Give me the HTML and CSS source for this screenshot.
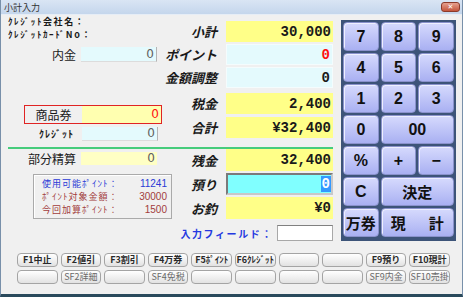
FILE: index.html
```html
<!DOCTYPE html>
<html lang="ja">
<head>
    <meta charset="UTF-8">
    <title>小計入力</title>
    <link rel="stylesheet" href="styles.css">
</head>
<body>

<div class="window">
    <div class="titlebar">
        <span class="title">小計入力</span>
        <span class="close">✕</span>
    </div>

    <div class="main">
        <div class="entry">
            <div class="upper">
                <div class="left-col">
                    <div class="credit">ｸﾚｼﾞｯﾄ会社名：</div>
                    <div class="credit">ｸﾚｼﾞｯﾄｶｰﾄﾞNo：</div>

                    <div class="lrow deposit-row">
                        <span class="lbl">内金</span>
                        <span class="sbox cyan">0</span>
                    </div>

                    <div class="coupon">
                        <span class="coupon-lbl">商品券</span>
                        <span class="sbox yellow red-text">0</span>
                    </div>

                    <div class="lrow credit-row">
                        <span class="lbl small">ｸﾚｼﾞｯﾄ</span>
                        <span class="sbox cyan">0</span>
                    </div>
                </div>

                <div class="mid-col">
                    <div class="mrow first">
                        <span class="mlbl">小計</span>
                        <span class="vbox yellow">30,000</span>
                    </div>
                    <div class="mrow">
                        <span class="mlbl">ポイント</span>
                        <span class="vbox cyan red-text">0</span>
                    </div>
                    <div class="mrow">
                        <span class="mlbl">金額調整</span>
                        <span class="vbox cyan">0</span>
                    </div>
                    <div class="mrow tax">
                        <span class="mlbl">税金</span>
                        <span class="vbox yellow">2,400</span>
                    </div>
                    <div class="mrow total">
                        <span class="mlbl">合計</span>
                        <span class="vbox yellow">¥32,400</span>
                    </div>
                </div>
            </div>

            <div class="divider"></div>

            <div class="lower">
                <div class="left-col wide">
                    <div class="lrow partial-row">
                        <span class="lbl">部分精算</span>
                        <span class="sbox pale">0</span>
                    </div>

                    <div class="points">
                        <div class="prow blue"><span>使用可能ﾎﾟｲﾝﾄ：</span><span class="pnum">11241</span></div>
                        <div class="prow brown"><span>ﾎﾟｲﾝﾄ対象金額：</span><span class="pnum">30000</span></div>
                        <div class="prow brown"><span>今回加算ﾎﾟｲﾝﾄ：</span><span class="pnum">1500</span></div>
                    </div>
                </div>

                <div class="mid-col">
                    <div class="mrow low">
                        <span class="mlbl">残金</span>
                        <span class="vbox yellow">32,400</span>
                    </div>
                    <div class="mrow low gap">
                        <span class="mlbl">預り</span>
                        <span class="vbox active"><span class="sel">0</span></span>
                    </div>
                    <div class="mrow low gap">
                        <span class="mlbl">お釣</span>
                        <span class="vbox yellow">¥0</span>
                    </div>
                </div>
            </div>

            <div class="field-row">
                <span class="field-lbl">入力フィールド：</span>
                <span class="field-box"></span>
            </div>
        </div>

        <div class="keypad">
            <button class="key">7</button>
            <button class="key">8</button>
            <button class="key">9</button>
            <button class="key">4</button>
            <button class="key">5</button>
            <button class="key">6</button>
            <button class="key">1</button>
            <button class="key">2</button>
            <button class="key">3</button>
            <button class="key">0</button>
            <button class="key span2">00</button>
            <button class="key">%</button>
            <button class="key">+</button>
            <button class="key">−</button>
            <button class="key">C</button>
            <button class="key span2 jp">決定</button>
            <button class="key jp">万券</button>
            <button class="key span2 jp wide-text">現　計</button>
        </div>
    </div>

    <div class="fkeys">
        <button class="fkey">F1中止</button>
        <button class="fkey">F2値引</button>
        <button class="fkey">F3割引</button>
        <button class="fkey">F4万券</button>
        <button class="fkey">F5ﾎﾟｲﾝﾄ</button>
        <button class="fkey">F6ｸﾚｼﾞｯﾄ</button>
        <button class="fkey"></button>
        <button class="fkey"></button>
        <button class="fkey">F9預り</button>
        <button class="fkey">F10現計</button>

        <button class="fkey sub"></button>
        <button class="fkey sub">SF2詳細</button>
        <button class="fkey sub"></button>
        <button class="fkey sub">SF4免税</button>
        <button class="fkey sub"></button>
        <button class="fkey sub"></button>
        <button class="fkey sub"></button>
        <button class="fkey sub"></button>
        <button class="fkey sub">SF9内金</button>
        <button class="fkey sub">SF10売掛</button>
    </div>
</div>

</body>
</html>
```

FILE: styles.css
```css
/* Window */
body {
    margin: 0;
    width: 463px;
    height: 297px;
    overflow: hidden;
    font-family: "Noto Sans CJK JP", sans-serif;
    color: #1a1a1a;
}

.window {
    width: 463px;
    height: 297px;
    box-sizing: border-box;
    background: #f0f0f0;
    border-left: 1px solid #7890aa;
    border-right: 1px solid #7890aa;
    border-bottom: 3px solid #2a4a5c;
}

.titlebar {
    height: 15px;
    box-sizing: border-box;
    padding: 0 2px 0 3px;
    display: flex;
    align-items: center;
    justify-content: space-between;
    background: linear-gradient(#d9e5f4, #c4d6ec);
    border-bottom: 1px solid #e6edf6;
}

.title {
    font-size: 9px;
    line-height: 1;
    color: #333;
}

.close {
    width: 19px;
    height: 10px;
    box-sizing: border-box;
    border: 1px solid #8c3a2a;
    border-radius: 3px;
    background: linear-gradient(#e6a08e, #c4553c);
    color: #fff;
    font-size: 7px;
    line-height: 8px;
    text-align: center;
    font-weight: bold;
    font-family: "DejaVu Sans", sans-serif;
}

/* Layout */
.main {
    display: flex;
    padding-left: 7px;
}

.entry {
    width: 325px;
}

.upper {
    display: flex;
    height: 132px;
}

.lower {
    display: flex;
    height: 70px;
}

.left-col {
    width: 154px;
}

.left-col.wide {
    width: 165px;
}

.mid-col {
    flex: 1;
}

.divider {
    height: 2px;
    background: #46cc7c;
}

/* Left column */
.credit {
    font-size: 9px;
    font-weight: bold;
    line-height: 13px;
    letter-spacing: 1.6px;
}

.lrow {
    display: flex;
    align-items: center;
}

.lbl {
    width: 68px;
    text-align: right;
    font-size: 12px;
    line-height: 1;
}

.lbl.small {
    width: 66px;
    font-size: 10px;
    font-weight: bold;
    letter-spacing: 1px;
}

.sbox {
    margin-left: 5px;
    width: 76px;
    box-sizing: border-box;
    padding-right: 2px;
    text-align: right;
    font-family: "DejaVu Sans", sans-serif;
    font-size: 12px;
    color: #606060;
    border-right: 1px solid #b4b4b4;
    border-bottom: 1px solid #dcdcdc;
}

.deposit-row {
    margin-top: 6px;
}

.deposit-row .sbox {
    height: 15px;
    line-height: 14px;
}

.credit-row {
    margin-top: 3px;
}

.credit-row .sbox {
    margin-left: 8px;
    height: 14px;
    line-height: 13px;
}

.partial-row {
    margin-top: 3px;
}

.partial-row .sbox {
    height: 13px;
    line-height: 12px;
    border: none;
}

.coupon {
    margin-top: 43px;
    margin-left: 16px;
    width: 138px;
    height: 19px;
    box-sizing: border-box;
    border: 1px solid #e02424;
    display: flex;
}

.coupon-lbl {
    width: 57px;
    text-align: center;
    font-size: 12px;
    line-height: 17px;
}

.coupon .sbox {
    margin-left: 0;
    flex: 1;
    height: 17px;
    line-height: 17px;
    border: none;
}

.cyan {
    background: #e4fafd;
}

.yellow {
    background: #ffff88;
}

.pale {
    background: #ffffc4;
}

.coupon .yellow {
    background: #ffffb0;
}

.red-text {
    color: #ff1010;
}

/* Points box */
.points {
    margin-top: 9px;
    margin-left: 25px;
    width: 139px;
    height: 45px;
    box-sizing: border-box;
    padding: 2px 4px 0 8px;
    border: 1px solid #aaaaaa;
    box-shadow: inset 1px 1px 0 #ffffff;
}

.prow {
    display: flex;
    justify-content: space-between;
    align-items: center;
    font-size: 9px;
    line-height: 13px;
    letter-spacing: 1px;
}

.pnum {
    font-family: "Liberation Sans", sans-serif;
    font-size: 10px;
    letter-spacing: 0;
}

.blue {
    color: #2a3ad6;
}

.brown {
    color: #a23c3c;
}

/* Middle column */
.mrow {
    display: flex;
    align-items: center;
    height: 21px;
    margin-top: 2px;
}

.mrow.first {
    margin-top: 6px;
}

.mrow.tax {
    margin-top: 5px;
}

.mrow.total {
    margin-top: 3px;
}

.mrow.low {
    height: 22px;
    margin-top: 0;
}

.mrow.low.gap {
    margin-top: 2px;
}

.mlbl {
    flex: 1;
    margin-right: 9px;
    text-align: right;
    font-size: 13px;
    font-weight: bold;
    font-style: italic;
    line-height: 1;
}

.vbox {
    width: 107px;
    height: 100%;
    box-sizing: border-box;
    padding-right: 2px;
    display: flex;
    align-items: center;
    justify-content: flex-end;
    font-family: "Liberation Mono", monospace;
    font-size: 14px;
    font-weight: bold;
}

.vbox.cyan {
    border: 1px solid #f4fcfd;
}

.vbox.active {
    background: #80ffff;
    border: 2px solid #7a7a7a;
    border-right-color: #c8c8c8;
    border-bottom-color: #c8c8c8;
    padding-right: 0;
}

.sel {
    background: #3399ff;
    color: #fff;
    padding: 0 1px;
    line-height: 16px;
}

.field-row {
    margin-top: 6px;
    display: flex;
    justify-content: flex-end;
    align-items: center;
}

.field-lbl {
    font-size: 10px;
    font-weight: bold;
    color: #2438e0;
    letter-spacing: 1.6px;
    margin-right: 4px;
}

.field-box {
    width: 56px;
    height: 16px;
    box-sizing: border-box;
    background: #fff;
    border: 1px solid #a8a8a8;
    border-top-color: #808080;
}

/* Keypad */
.keypad {
    margin-top: 5px;
    margin-left: 8px;
    width: 115px;
    height: 221px;
    box-sizing: border-box;
    padding: 2px;
    background: #3d5479;
    display: grid;
    grid-template-columns: repeat(3, 1fr);
    grid-auto-rows: 29px;
    gap: 2px;
}

.key {
    margin: 0;
    padding: 0;
    border: 1px solid #8a92cc;
    border-radius: 4px;
    background: linear-gradient(#d6dafd, #a9b0f2);
    box-shadow: inset 1px 1px 0 #eef0ff;
    color: #111;
    font-family: "Liberation Sans", sans-serif;
    font-size: 16px;
    font-weight: bold;
}

.key.span2 {
    grid-column: span 2;
}

.key.jp {
    font-family: "Noto Sans CJK JP", sans-serif;
    font-size: 15px;
}

.key.wide-text {
    letter-spacing: 4px;
    padding-left: 4px;
}

/* Function keys */
.fkeys {
    margin-top: 12px;
    margin-left: 16px;
    width: 433px;
    display: grid;
    grid-template-columns: repeat(10, 1fr);
    grid-auto-rows: 14px;
    column-gap: 3px;
    row-gap: 3px;
}

.fkey {
    margin: 0;
    padding: 0;
    border: 1px solid #a4a4a4;
    border-radius: 4px;
    background: linear-gradient(#ffffff, #e2e2e2);
    font-family: "Noto Sans CJK JP", sans-serif;
    font-size: 9px;
    font-weight: bold;
    line-height: 12px;
    color: #2a2a2a;
    white-space: nowrap;
    overflow: hidden;
}

.fkey.sub {
    font-weight: normal;
    color: #6a6a6a;
}
```
